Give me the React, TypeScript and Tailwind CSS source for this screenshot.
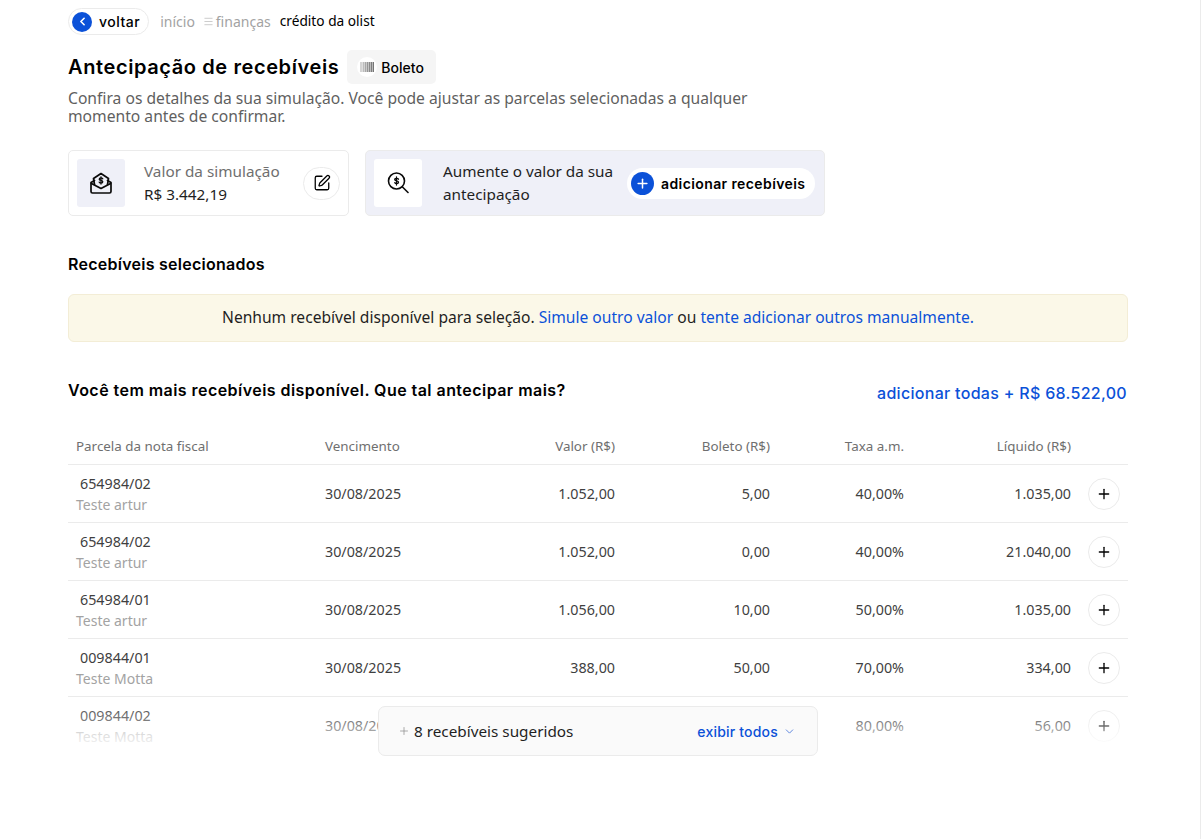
import { ChevronDown, ChevronLeft, Menu, Plus, SquarePen } from "lucide-react";

const rows = [
  { nf: "654984/02", name: "Teste artur", venc: "30/08/2025", valor: "1.052,00", boleto: "5,00", taxa: "40,00%", liq: "1.035,00" },
  { nf: "654984/02", name: "Teste artur", venc: "30/08/2025", valor: "1.052,00", boleto: "0,00", taxa: "40,00%", liq: "21.040,00" },
  { nf: "654984/01", name: "Teste artur", venc: "30/08/2025", valor: "1.056,00", boleto: "10,00", taxa: "50,00%", liq: "1.035,00" },
  { nf: "009844/01", name: "Teste Motta", venc: "30/08/2025", valor: "388,00", boleto: "50,00", taxa: "70,00%", liq: "334,00" },
  { nf: "009844/02", name: "Teste Motta", venc: "30/08/2025", valor: "70,00", boleto: "5,00", taxa: "80,00%", liq: "56,00" },
];

const cols = "grid grid-cols-[249px_145px_145px_155px_134px_167px_49px]";
const heading = "font-['Inter',sans-serif]";

function MailIcon() {
  return (
    <svg width="24" height="24" viewBox="0 0 24 24" fill="none" stroke="#0a0a0a" strokeWidth="1.7" strokeLinejoin="round" strokeLinecap="round">
      <path d="M5.500 9.500 2 11.500v9a1.500 1.500 0 0 0 1.500 1.500h17a1.500 1.500 0 0 0 1.500-1.500v-9l-3.500-2" />
      <path d="M5.500 13.500 4.500 7.500 12 2.500l7.500 5-1 6" />
      <path d="m2.500 12.500 9.500 5 9.500-5" />
      <path d="M13.800 7.800c-.4-.6-1-.9-1.800-.9-1 0-1.800.5-1.800 1.300 0 1.700 3.600.8 3.600 2.500 0 .8-.8 1.300-1.800 1.300-.8 0-1.400-.3-1.800-.9M12 5.800v7.200" strokeWidth="1.300" />
    </svg>
  );
}

function SearchMoneyIcon() {
  return (
    <svg width="22" height="22" viewBox="0 0 22 22" fill="none" stroke="#0a0a0a" strokeWidth="1.6" strokeLinecap="round">
      <circle cx="9.500" cy="9" r="8" />
      <path d="m15.500 15 5.500 5.500" />
      <path d="M11.500 7.200c-.4-.6-1.100-.9-1.900-.9-1.100 0-1.900.5-1.900 1.300 0 1.700 3.800.9 3.800 2.700 0 .8-.9 1.300-1.900 1.300-.8 0-1.500-.3-1.900-.9M9.500 5v8" strokeWidth="1.300" />
    </svg>
  );
}

function BarcodeIcon() {
  return (
    <svg width="14" height="10" viewBox="0 0 14 10">
      <rect x="0" y="0" width="2" height="10" fill="#d4d4d4" />
      <rect x="2.500" y="0" width="1.500" height="10" fill="#bdbdbd" />
      <rect x="4.500" y="0" width="1.500" height="10" fill="#a8a8a8" />
      <rect x="6.500" y="0" width="1.500" height="10" fill="#969696" />
      <rect x="8.500" y="0" width="1.500" height="10" fill="#8a8a8a" />
      <rect x="10.500" y="0" width="1.500" height="10" fill="#7d7d7d" />
      <rect x="12.500" y="0" width="1.500" height="10" fill="#757575" />
    </svg>
  );
}

export default function App() {
  return (
    <div className="w-[1201px] h-[839px] overflow-hidden border-r border-[#ebebeb] bg-white font-['Noto_Sans',sans-serif] text-[#1f1f1f]">
      <div className="relative ml-[68px] w-[1060px]">
        {/* Breadcrumb */}
        <div className="flex items-center h-[27px] mt-[8px] text-[14px]">
          <button className={`flex items-center gap-[7px] h-[27px] pl-[3px] pr-[8px] rounded-full border border-[#ebebeb] ${heading}`}>
            <span className="flex items-center justify-center w-[20px] h-[20px] rounded-full bg-[#0b51d8] text-white">
              <ChevronLeft size={13} strokeWidth={3} />
            </span>
            <span className="text-[14px] tracking-[0.5px] font-medium text-black">voltar</span>
          </button>
          <span className="ml-[11px] text-[#a3a3a3]">início</span>
          <span className="ml-[8px] flex items-center gap-[2px] text-[#a3a3a3]">
            <Menu size={11} strokeWidth={1.2} />
            finanças
          </span>
          <span className="ml-[9px] text-[13.7px] text-black">crédito da olist</span>
        </div>

        {/* Title */}
        <div className="flex items-center mt-[15px] h-[34px]">
          <h1 className={`text-[20px] tracking-[0.6px] font-semibold text-black ${heading}`}>Antecipação de recebíveis</h1>
          <div className="flex items-center gap-[4px] ml-[8px] h-[34px] pl-[10px] pr-[12px] rounded-[5px] bg-[#f5f5f5]">
            <span className="flex items-center justify-center w-[20px] h-[20px] rounded-full bg-white">
              <BarcodeIcon />
            </span>
            <span className={`text-[14px] font-medium text-black ${heading}`}>Boleto</span>
          </div>
        </div>
        <p className="mt-[5px] w-[730px] text-[15.65px] leading-[18px] text-[#5f5f5f]">
          Confira os detalhes da sua simulação. Você pode ajustar as parcelas selecionadas a qualquer momento antes de confirmar.
        </p>

        {/* Cards */}
        <div className="flex gap-[16px] mt-[25px]">
          <div className="flex items-center w-[281px] h-[66px] px-[8px] rounded-[5px] border border-[#ebebeb]">
            <div className="flex items-center justify-center w-[48px] h-[48px] rounded-[3px] bg-[#eff0f8]">
              <MailIcon />
            </div>
            <div className="ml-[19px] flex-1">
              <p className="text-[15.3px] leading-[23px] text-[#6f6f6f]">Valor da simulação</p>
              <p className="text-[15.3px] leading-[23px] text-[#1f1f1f]">R$ 3.442,19</p>
            </div>
            <span className="flex items-center justify-center w-[37px] h-[33px] rounded-full border border-[#ebebeb]">
              <SquarePen size={18} strokeWidth={1.7} className="text-black" />
            </span>
          </div>
          <div className="flex items-center w-[460px] h-[66px] px-[8px] rounded-[5px] border border-[#ebebeb] bg-[#eff0f8]">
            <div className="flex items-center justify-center w-[48px] h-[48px] rounded-[3px] bg-white">
              <SearchMoneyIcon />
            </div>
            <p className="ml-[21px] w-[184px] text-[15.3px] leading-[23px] text-[#1f1f1f]">Aumente o valor da sua antecipação</p>
            <button className={`flex items-center gap-[7px] h-[31px] pl-[4px] pr-[10px] rounded-full bg-white ${heading}`}>
              <span className="flex items-center justify-center w-[23px] h-[23px] rounded-full bg-[#0b51d8] text-white">
                <Plus size={15} strokeWidth={2.4} />
              </span>
              <span className="text-[14px] tracking-[0.4px] font-semibold text-black whitespace-nowrap">adicionar recebíveis</span>
            </button>
          </div>
        </div>

        <h2 className={`mt-[38px] text-[16px] tracking-[0.26px] leading-[20px] font-semibold text-black ${heading}`}>Recebíveis selecionados</h2>

        <div className="flex items-center justify-center h-[48px] mt-[20px] rounded-[6px] border border-[#f3edd6] bg-[#fbf8e8] text-[15.6px] text-[#1f1f1f]">
          <span>
            Nenhum recebível disponível para seleção. <span className="text-[#0b51d8]">Simule outro valor</span> ou{" "}
            <span className="text-[#0b51d8]">tente adicionar outros manualmente.</span>
          </span>
        </div>

        <div className="flex items-start justify-between mt-[38px] pr-[1px]">
          <h2 className={`text-[16px] tracking-[0.45px] leading-[20px] font-semibold text-black ${heading}`}>Você tem mais recebíveis disponível. Que tal antecipar mais?</h2>
          <span className={`mt-[3px] text-[16px] tracking-[0.3px] leading-[20px] font-medium text-[#0b51d8] ${heading}`}>adicionar todas + R$ 68.522,00</span>
        </div>

        {/* Table */}
        <div className="relative mt-[22px] h-[325px] overflow-hidden">
          <div className={`${cols} h-[40px] items-center px-[8px] pt-[4px] border-b border-[#ebebeb] text-[13.4px] text-[#6f6f6f]`}>
            <span>Parcela da nota fiscal</span>
            <span>Vencimento</span>
            <span className="text-right">Valor (R$)</span>
            <span className="text-right">Boleto (R$)</span>
            <span className="text-right">Taxa a.m.</span>
            <span className="text-right">Líquido (R$)</span>
            <span />
          </div>
          {rows.map((r, i) => (
            <div key={i} className={`${cols} h-[58px] items-center px-[8px] border-b border-[#ebebeb] text-[14.3px] text-[#3f3f3f]`}>
              <div>
                <p className="pl-[4px] leading-[21px]">{r.nf}</p>
                <p className="leading-[21px] text-[14px] text-[#a3a3a3]">{r.name}</p>
              </div>
              <span>{r.venc}</span>
              <span className="text-right">{r.valor}</span>
              <span className="text-right">{r.boleto}</span>
              <span className="text-right">{r.taxa}</span>
              <span className="text-right">{r.liq}</span>
              <span className="flex justify-end">
                <span className="flex items-center justify-center w-[32px] h-[32px] rounded-full border border-[#ebebeb] text-black">
                  <Plus size={16} strokeWidth={2} />
                </span>
              </span>
            </div>
          ))}
          <div className="absolute inset-x-0 bottom-0 h-[50px] bg-gradient-to-b from-white/0 via-white/40 to-white" />
        </div>

        {/* Floating bar */}
        <div className="absolute left-[310px] top-[698px] flex items-center justify-between w-[440px] h-[50px] pl-[19px] pr-[21px] rounded-[7px] border border-[#ebebeb] bg-[#fafafa]">
          <span className="flex items-center gap-[4px] text-[15.3px] text-[#1f1f1f]">
            <Plus size={12} strokeWidth={1.5} className="text-[#8f8f8f]" />
            8 recebíveis sugeridos
          </span>
          <span className={`flex items-center gap-[5px] text-[14px] tracking-[0.2px] font-medium text-[#0b51d8] ${heading}`}>
            exibir todos
            <ChevronDown size={13} strokeWidth={1.5} className="text-[#3f6fd8]" />
          </span>
        </div>
      </div>
    </div>
  );
}
